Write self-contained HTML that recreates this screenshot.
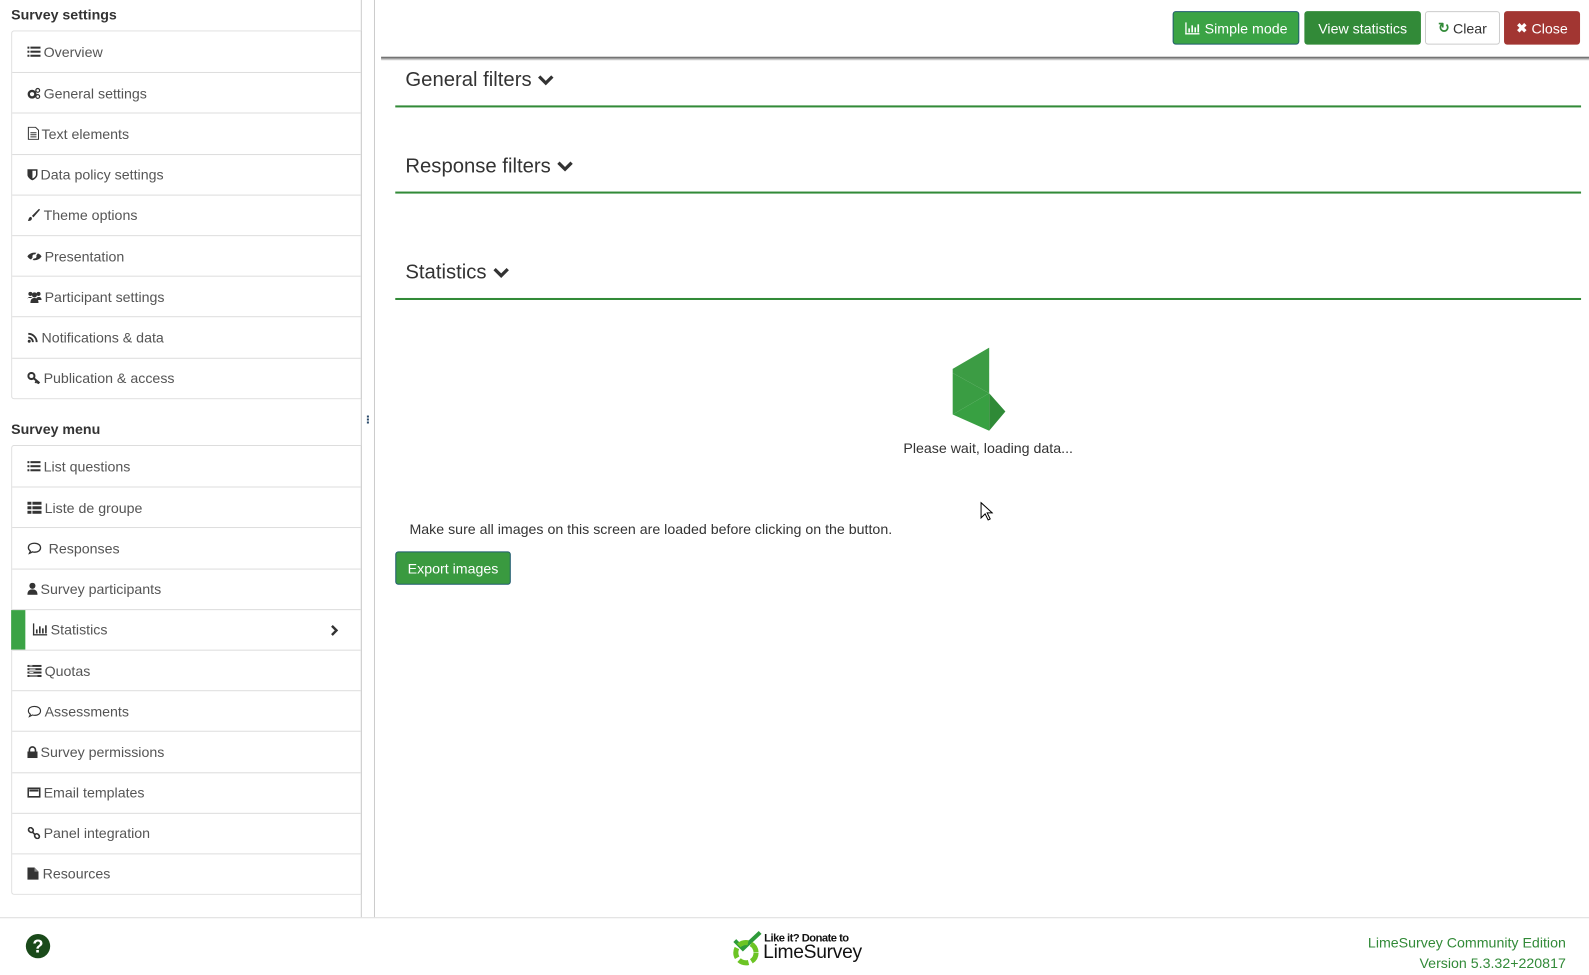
<!DOCTYPE html>
<html><head><meta charset="utf-8"><style>
*{box-sizing:border-box;margin:0;padding:0}
body{width:1589px;height:975px;background:#fff;font-family:"Liberation Sans",sans-serif;color:#333;position:relative;overflow:hidden;font-size:14px}
#w{position:absolute;left:0;top:0;width:1568px;height:962px;transform:scale(1.0135);transform-origin:0 0}
.h{position:absolute;left:11px;font-weight:bold;font-size:14px;color:#333}
.list{position:absolute;left:11px;width:346px;border:1px solid #ddd;border-radius:3px 0 0 3px;border-right:1px solid #ccc}
.it{height:40.2px;border-top:1px solid #ddd;display:flex;align-items:center;padding-left:15px;color:#555;font-size:14px;position:relative}
.it:first-child{border-top:none}
.ic{display:inline-block;width:13px;height:12px;margin-right:3px;vertical-align:middle}
.act{padding-left:20px}
.act:before{content:"";position:absolute;left:-1px;top:0;bottom:0;width:14px;background:#3ba345}
.btn{position:absolute;top:11px;height:33px;border-radius:3px;color:#fff;font-size:14px;display:flex;align-items:center;justify-content:center}
.sec{position:absolute;left:390px;width:1170px;border-bottom:2px solid #328a38;font-size:20px;color:#333;padding-left:10px}
svg{display:block}
</style></head><body><div id="w">
<div style="position:absolute;left:356px;top:0;width:1px;height:905px;background:#ccc"></div>
<div class="h" style="top:6px">Survey settings</div>
<div class="list" style="top:30px">
<div class="it"><svg class="ic" viewBox="0 0 13 12"><g fill="#333"><rect x="0" y="1" width="2" height="2"/><rect x="3" y="1" width="10" height="2"/><rect x="0" y="5" width="2" height="2"/><rect x="3" y="5" width="10" height="2"/><rect x="0" y="9" width="2" height="2"/><rect x="3" y="9" width="10" height="2"/></g></svg>Overview</div>
<div class="it"><svg class="ic" viewBox="0 0 14 12"><circle cx="5" cy="7" r="3.5" fill="none" stroke="#333" stroke-width="2.5"/><circle cx="11" cy="3" r="2" fill="none" stroke="#333" stroke-width="1.3"/><circle cx="11" cy="9.5" r="2" fill="none" stroke="#333" stroke-width="1.3"/></svg>General settings</div>
<div class="it"><svg class="ic" viewBox="0 0 12 13" style="width:12px;height:13px;margin-right:2px"><path d="M1 .5h7l3 3v9H1z" fill="none" stroke="#333"/><path d="M3 6h6M3 8h6M3 10h6" stroke="#333"/></svg>Text elements</div>
<div class="it"><svg class="ic" viewBox="0 0 10 12" style="width:10px"><path d="M0 1h10v5c0 3-3 5-5 6C3 11 0 9 0 6z" fill="#333"/><path d="M5 2.5h3.5v3.5C8.5 8 6.5 9.5 5 10z" fill="#fff"/></svg>Data policy settings</div>
<div class="it"><svg class="ic" viewBox="0 0 12 12"><path d="M11 0L4 7l1.5 1.5L12 1zM3 8c-2 0-2 2-3 4 2 0 4 0 4-3z" fill="#333"/></svg>Theme options</div>
<div class="it"><svg class="ic" viewBox="0 0 14 12" style="width:14px"><path d="M0 6c3-5 11-5 14 0-3 5-11 5-14 0z" fill="#333"/><circle cx="7" cy="6" r="2" fill="#fff"/><path d="M3 11L11 1" stroke="#fff" stroke-width="1.5"/></svg>Presentation</div>
<div class="it"><svg class="ic" viewBox="0 0 14 12" style="width:14px"><g fill="#333"><circle cx="3" cy="3" r="2"/><circle cx="11" cy="3" r="2"/><circle cx="7" cy="4" r="2.5"/><path d="M0 9c0-3 2-3 3-3s2 1 2 1H0zM9 7s1-1 2-1 3 0 3 3H9z"/><path d="M3 12c0-4 2-5 4-5s4 1 4 5z"/></g></svg>Participant settings</div>
<div class="it"><svg class="ic" viewBox="0 0 12 12" style="width:11px"><g fill="none" stroke="#333" stroke-width="2"><path d="M1 2a9 9 0 0 1 9 9M1 6a5 5 0 0 1 5 5"/></g><circle cx="2" cy="10" r="1.6" fill="#333"/></svg>Notifications &amp; data</div>
<div class="it"><svg class="ic" viewBox="0 0 13 12"><circle cx="4" cy="4" r="3" fill="none" stroke="#333" stroke-width="2"/><path d="M6 6l6 5M9 9l-1 2M11 10.5l-1 1" stroke="#333" stroke-width="2"/></svg>Publication &amp; access</div>
</div>
<div class="h" style="top:415px">Survey menu</div>
<div class="list" style="top:439px">
<div class="it"><svg class="ic" viewBox="0 0 13 12"><g fill="#333"><rect x="0" y="1" width="2" height="2"/><rect x="3" y="1" width="10" height="2"/><rect x="0" y="5" width="2" height="2"/><rect x="3" y="5" width="10" height="2"/><rect x="0" y="9" width="2" height="2"/><rect x="3" y="9" width="10" height="2"/></g></svg>List questions</div>
<div class="it"><svg class="ic" viewBox="0 0 14 12" style="width:14px"><g fill="#333"><rect x="0" y="0" width="4" height="3"/><rect x="5" y="0" width="9" height="3"/><rect x="0" y="4.5" width="4" height="3"/><rect x="5" y="4.5" width="9" height="3"/><rect x="0" y="9" width="4" height="3"/><rect x="5" y="9" width="9" height="3"/></g></svg>Liste de groupe</div>
<div class="it"><svg class="ic" viewBox="0 0 14 12" style="width:14px;margin-right:7px"><path d="M7 1C3 1 1 3 1 5.5c0 1.5 1 2.5 2 3.3L2 11l3-1.5c.7.2 1.3.3 2 .3 4 0 6-2 6-4.3S11 1 7 1z" fill="none" stroke="#333" stroke-width="1.3"/></svg>Responses</div>
<div class="it"><svg class="ic" viewBox="0 0 10 12" style="width:10px"><circle cx="5" cy="3" r="3" fill="#333"/><path d="M0 12c0-4 2-5.5 5-5.5S10 8 10 12z" fill="#333"/></svg>Survey participants</div>
<div class="it act"><svg class="ic" viewBox="0 0 14 12" style="width:15px"><g fill="#333"><rect x="0" y="0" width="1.3" height="12"/><rect x="0" y="10.7" width="14" height="1.3"/><rect x="3" y="6" width="1.6" height="4"/><rect x="6" y="3" width="1.6" height="7"/><rect x="9" y="5" width="1.6" height="5"/><rect x="12" y="2" width="1.6" height="8"/></g></svg>Statistics<svg style="position:absolute;right:22px;top:14px" width="8" height="12" viewBox="0 0 8 12"><path d="M1.5 1.5l4.5 4.5-4.5 4.5" fill="none" stroke="#333" stroke-width="2.4"/></svg></div>
<div class="it"><svg class="ic" viewBox="0 0 14 12" style="width:14px"><g fill="#333"><rect x="0" y="0" width="14" height="2"/><rect x="0" y="3.3" width="14" height="2"/><rect x="0" y="6.6" width="14" height="2"/><rect x="0" y="10" width="14" height="2"/></g><path d="M2 1h3M2 4.3h6M2 7.6h4M2 11h8" stroke="#fff" stroke-width=".8"/></svg>Quotas</div>
<div class="it"><svg class="ic" viewBox="0 0 14 12" style="width:14px"><path d="M7 1C3 1 1 3 1 5.5c0 1.5 1 2.5 2 3.3L2 11l3-1.5c.7.2 1.3.3 2 .3 4 0 6-2 6-4.3S11 1 7 1z" fill="none" stroke="#333" stroke-width="1.1"/></svg>Assessments</div>
<div class="it"><svg class="ic" viewBox="0 0 10 12" style="width:10px"><path d="M2 6V4a3 3 0 0 1 6 0v2" fill="none" stroke="#333" stroke-width="1.6"/><rect x="0" y="5.5" width="10" height="6.5" fill="#333"/></svg>Survey permissions</div>
<div class="it"><svg class="ic" viewBox="0 0 13 12"><rect x=".8" y="1.8" width="11.4" height="8.4" fill="none" stroke="#333" stroke-width="1.6"/><rect x="2" y="3" width="9" height="2" fill="#333"/></svg>Email templates</div>
<div class="it"><svg class="ic" viewBox="0 0 13 12"><g fill="none" stroke="#333" stroke-width="1.6"><rect x="1" y="1" width="5" height="4" rx="2" transform="rotate(45 3.5 3)"/><rect x="7" y="7" width="5" height="4" rx="2" transform="rotate(45 9.5 9)"/><path d="M5 5l3 3"/></g></svg>Panel integration</div>
<div class="it"><svg class="ic" viewBox="0 0 11 12" style="width:11px;margin-right:4px"><path d="M0 0h7l4 4v8H0z" fill="#333"/><path d="M7 0v4h4" fill="#888"/></svg>Resources</div>
</div>
<div style="position:absolute;left:369px;top:0;width:1px;height:905px;background:#ccc"></div>
<div style="position:absolute;left:362px;top:410px;width:2px;height:8px;background:repeating-linear-gradient(#2a4a6a 0 2px,#fff 2px 3px)"></div>

<div class="btn" style="left:1157px;width:125px;background:#3ba345;border:1px solid #1f5b6e"><svg width="15" height="12" viewBox="0 0 14 12" style="margin-right:5px"><g fill="#fff"><rect x="0" y="0" width="1.3" height="12"/><rect x="0" y="10.7" width="14" height="1.3"/><rect x="3" y="6" width="1.6" height="4"/><rect x="6" y="3" width="1.6" height="7"/><rect x="9" y="5" width="1.6" height="5"/><rect x="12" y="2" width="1.6" height="8"/></g></svg>Simple mode</div>
<div class="btn" style="left:1287px;width:115px;background:#328a38">View statistics</div>
<div class="btn" style="left:1406px;width:74px;background:#fff;border:1px solid #ccc;color:#333"><span style="color:#328a38;font-weight:bold;margin-right:3px">&#x21bb;</span>Clear</div>
<div class="btn" style="left:1484px;width:75px;background:#a23632"><span style="font-weight:bold;margin-right:4px;font-size:13px">&#x2716;</span>Close</div>
<div style="position:absolute;left:376px;top:56px;width:1192px;height:4px;background:linear-gradient(#555,#bbb 60%,#fff)"></div>

<div class="sec" style="top:68px;height:38px">General filters <svg style="display:inline-block" width="17" height="12" viewBox="0 0 17 12"><path d="M2 2.5l6.5 6.5 6.5-6.5" fill="none" stroke="#333" stroke-width="3.2"/></svg></div>
<div class="sec" style="top:153px;height:38px">Response filters <svg style="display:inline-block" width="17" height="12" viewBox="0 0 17 12"><path d="M2 2.5l6.5 6.5 6.5-6.5" fill="none" stroke="#333" stroke-width="3.2"/></svg></div>
<div class="sec" style="top:258px;height:38px">Statistics <svg style="display:inline-block" width="17" height="12" viewBox="0 0 17 12"><path d="M2 2.5l6.5 6.5 6.5-6.5" fill="none" stroke="#333" stroke-width="3.2"/></svg></div>

<svg style="position:absolute;left:938px;top:343px" width="56" height="84" viewBox="0 0 56 84"><path d="M38 0L38 45 2 25 2 21z" fill="#3c9c44"/><path d="M2 25L38 45 2 66z" fill="#3a9d43"/><path d="M2 66L38 45 38 82z" fill="#38a042"/><path d="M38 45L54 63 38 82z" fill="#2f8a37"/></svg>
<div style="position:absolute;left:0;width:1950px;top:434px;text-align:center;font-size:14px;color:#333">Please wait, loading data...</div>
<div style="position:absolute;left:404px;top:514px;font-size:14px;color:#333">Make sure all images on this screen are loaded before clicking on the button.</div>
<div class="btn" style="left:390px;top:544px;width:114px;height:33px;background:#3a9a40;border:1px solid #1f5b6e">Export images</div>
<svg style="position:absolute;left:967px;top:495px" width="13" height="20" viewBox="0 0 13 20"><path d="M1 1v15l4-4 3 6 2-1-3-6h5z" fill="#fff" stroke="#000"/></svg>

<div style="position:absolute;left:0;top:905px;width:1589px;height:1px;background:#ddd"></div>
<svg style="position:absolute;left:25px;top:921px" width="25" height="25" viewBox="0 0 25 25"><circle cx="12.5" cy="12.5" r="12" fill="#1a4a1a"/><text x="12.5" y="19" text-anchor="middle" font-family="Liberation Sans" font-weight="bold" font-size="18" fill="#fff">?</text></svg>
<svg style="position:absolute;left:720px;top:918px" width="32" height="38" viewBox="0 0 32 38"><path d="M5 10l8 8L30 2" fill="none" stroke="#2e9b3a" stroke-width="4"/><circle cx="16" cy="22" r="10" fill="none" stroke="#6cc424" stroke-width="5" stroke-dasharray="10 3"/></svg>
<div style="position:absolute;left:754px;top:920px;font-size:11px;font-weight:bold;color:#111;letter-spacing:-.5px">Like it? Donate to</div>
<div style="position:absolute;left:753px;top:929px;font-size:19px;color:#111;letter-spacing:-.3px">LimeSurvey</div>
<div style="position:absolute;left:1200px;width:345px;top:920px;text-align:right;color:#328a38;font-size:14px;line-height:20px">LimeSurvey Community Edition<br>Version 5.3.32+220817</div>
</div></body></html>
